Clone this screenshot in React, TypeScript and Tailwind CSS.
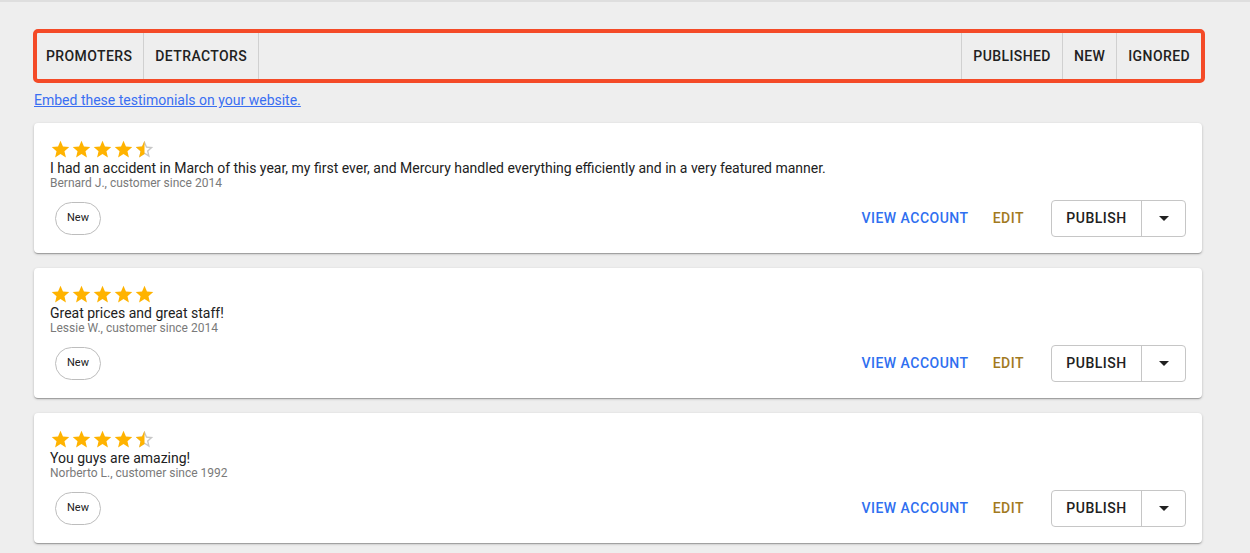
import React from "react";

const STAR =
  "M12 17.27L18.18 21l-1.64-7.03L22 9.24l-7.19-.61L12 2 9.19 8.63 2 9.24l5.46 4.73L5.82 21z";
const STAR_BORDER =
  "M22 9.24l-7.19-.62L12 2 9.19 8.63 2 9.24l5.46 4.73L5.82 21 12 17.27 18.18 21l-1.63-7.03L22 9.24zM12 15.4l-3.76 2.27 1-4.28-3.32-2.88 4.38-.38L12 6.1l1.71 4.04 4.38.38-3.32 2.88 1 4.28L12 15.4z";

function Star({ kind, id }: { kind: "full" | "half"; id: string }) {
  if (kind === "full") {
    return (
      <svg width="21" height="21" viewBox="0 0 24 24" className="block">
        <path d={STAR} fill="#ffb300" />
      </svg>
    );
  }
  return (
    <svg width="21" height="21" viewBox="0 0 24 24" className="block">
      <defs>
        <clipPath id={id}>
          <rect x="0" y="0" width="12" height="24" />
        </clipPath>
      </defs>
      <path d={STAR_BORDER} fill="#c8c8c8" />
      <path d={STAR} fill="#ffb300" clipPath={`url(#${id})`} />
    </svg>
  );
}

type Review = {
  stars: number;
  text: string;
  author: string;
};

const reviews: Review[] = [
  {
    stars: 4.5,
    text: "I had an accident in March of this year, my first ever, and Mercury handled everything efficiently and in a very featured manner.",
    author: "Bernard J., customer since 2014",
  },
  {
    stars: 5,
    text: "Great prices and great staff!",
    author: "Lessie W., customer since 2014",
  },
  {
    stars: 4.5,
    text: "You guys are amazing!",
    author: "Norberto L., customer since 1992",
  },
];

function Card({ r, idx }: { r: Review; idx: number }) {
  const stars = [0, 1, 2, 3, 4].map((i) => {
    if (i + 1 <= r.stars) return <Star key={i} kind="full" id={`s${idx}${i}`} />;
    return <Star key={i} kind="half" id={`h${idx}${i}`} />;
  });
  return (
    <div className="bg-white rounded-[4px] h-[130px] px-4 pt-[16px] shadow-[0_1px_3px_rgba(0,0,0,0.2),0_1px_1px_rgba(0,0,0,0.14),0_2px_1px_-1px_rgba(0,0,0,0.12)]">
      <div className="flex">{stars}</div>
      <div className="text-[14px] leading-[16px] text-[#212121]">{r.text}</div>
      <div className="text-[12px] leading-[14px] text-[#7a7a7a]">{r.author}</div>
      <div className="flex items-center mt-[10px] h-[37px]">
        <div className="ml-[5px] w-[46px] h-[33px] rounded-full border border-[#bdbdbd] flex items-center justify-center text-[11px] text-[#212121]">
          New
        </div>
        <div className="flex-1" />
        <span className="text-[14px] font-medium tracking-[0.5px] text-[#2f6ff0]">VIEW ACCOUNT</span>
        <span className="ml-[24px] text-[14px] font-medium tracking-[0.5px] text-[#a27a1e]">EDIT</span>
        <div className="ml-[27px] flex h-[37px] border border-[#c6c6c6] rounded-[4px]">
          <div className="w-[90px] flex items-center justify-center text-[14px] font-medium tracking-[0.5px] text-[#212121] border-r border-[#c6c6c6]">
            PUBLISH
          </div>
          <div className="w-[43px] flex items-center justify-center">
            <svg width="10" height="5" viewBox="0 0 10 5">
              <path d="M0 0 L10 0 L5 5 Z" fill="#212121" />
            </svg>
          </div>
        </div>
      </div>
    </div>
  );
}

function Tab({ label, right }: { label: string; right?: boolean }) {
  return (
    <div
      className={`h-full flex items-center px-[11px] text-[14px] font-medium tracking-[0.4px] text-[#212121] ${
        right ? "border-l border-[#d0d0d0]" : "border-r border-[#d0d0d0]"
      }`}
    >
      {label}
    </div>
  );
}

export default function App() {
  return (
    <div
      className="w-[1250px] h-[553px] bg-[#eeeeee] border-t-2 border-[#dedede] overflow-hidden"
      style={{ fontFamily: "Roboto, 'Liberation Sans', sans-serif" }}
    >
      <div className="ml-[34px] w-[1168px] pt-[27px]">
        <div className="ml-[-1px] w-[1172px] h-[54px] border-4 border-[#f44a27] rounded-[5px] flex">
          <div className="flex h-full">
            <div className="pl-[9px] pr-[11px] h-full flex items-center text-[14px] font-medium tracking-[0.4px] text-[#212121] border-r border-[#d0d0d0]">
              PROMOTERS
            </div>
            <Tab label="DETRACTORS" />
          </div>
          <div className="flex-1" />
          <div className="flex h-full">
            <Tab label="PUBLISHED" right />
            <Tab label="NEW" right />
            <Tab label="IGNORED" right />
          </div>
        </div>
        <div className="mt-[5px] h-[16px]">
          <a href="#" className="text-[14px] leading-[16px] text-[#3a6ff2] underline">
            Embed these testimonials on your website.
          </a>
        </div>
        <div className="mt-[19px] flex flex-col gap-[15px]">
          {reviews.map((r, i) => (
            <Card key={i} r={r} idx={i} />
          ))}
        </div>
      </div>
    </div>
  );
}
